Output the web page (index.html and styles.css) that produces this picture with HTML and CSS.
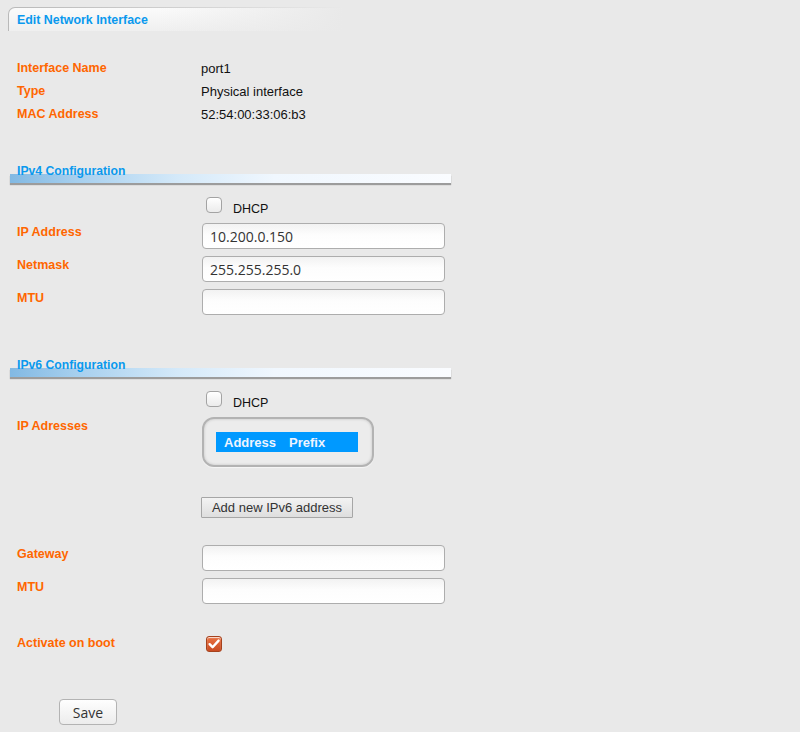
FILE: index.html
```html
<!DOCTYPE html>
<html>
<head>
<meta charset="utf-8">
<title>Edit Network Interface</title>
<link rel="stylesheet" href="styles.css">
</head>
<body>
<div class="page">
  <div class="tab-wrap"><div class="tab">Edit Network Interface</div></div>

  <div class="info">
    <div class="row info-row"><div class="label">Interface Name</div><div class="value">port1</div></div>
    <div class="row info-row"><div class="label">Type</div><div class="value">Physical interface</div></div>
    <div class="row info-row"><div class="label">MAC Address</div><div class="value">52:54:00:33:06:b3</div></div>
  </div>

  <div class="section sec-v4">
    <div class="section-title">IPv4 Configuration</div>
    <div class="section-bar"></div>
  </div>

  <div class="row dhcp-row">
    <div class="label"></div>
    <span class="check"></span><span class="check-text">DHCP</span>
  </div>
  <div class="row field"><div class="label">IP Address</div><input class="text" type="text" value="10.200.0.150"></div>
  <div class="row field"><div class="label">Netmask</div><input class="text" type="text" value="255.255.255.0"></div>
  <div class="row field"><div class="label">MTU</div><input class="text" type="text" value=""></div>

  <div class="section sec-v6">
    <div class="section-title">IPv6 Configuration</div>
    <div class="section-bar"></div>
  </div>

  <div class="row dhcp-row">
    <div class="label"></div>
    <span class="check"></span><span class="check-text">DHCP</span>
  </div>
  <div class="row field"><div class="label">IP Adresses</div>
    <div class="addr-box">
      <div class="addr-head"><span class="th-addr">Address</span><span class="th-prefix">Prefix</span></div>
    </div>
  </div>
  <div class="row btn-row"><div class="label"></div><button class="add-btn" type="button">Add new IPv6 address</button></div>

  <div class="row field gw"><div class="label">Gateway</div><input class="text" type="text" value=""></div>
  <div class="row field"><div class="label">MTU</div><input class="text" type="text" value=""></div>

  <div class="row boot-row"><div class="label">Activate on boot</div>
    <span class="check checked"><svg width="14" height="14" viewBox="0 0 14 14"><path d="M2.6 7.2 L5.6 10.2 L11.6 3.6" fill="none" stroke="#fff" stroke-width="2.4" stroke-linecap="round" stroke-linejoin="round"/></svg></span>
  </div>

  <div class="save-row"><button class="save-btn" type="button">Save</button></div>
</div>
</body>
</html>
```

FILE: styles.css
```css
html, body {
  margin: 0;
  padding: 0;
  background: #e9e9e9;
}
body {
  font-family: "Liberation Sans", Arial, sans-serif;
  font-size: 12px;
  color: #111;
}
.page {
  padding-top: 7px;
  width: 800px;
  height: 732px;
  box-sizing: border-box;
}
.tab-wrap {
  margin-left: 8px;
  width: 335px;
  height: 24px;
  box-sizing: border-box;
  padding: 1px 0 0 1px;
  border-top-left-radius: 7px;
  background: linear-gradient(to right, #b9b9b9 0%, #cbcbcb 40%, rgba(233,233,233,0) 100%);
}
.tab {
  height: 23px;
  line-height: 24px;
  padding-left: 8px;
  border-top-left-radius: 6px;
  background:
    linear-gradient(to right, rgba(233,233,233,0) 0%, rgba(233,233,233,0) 45%, #e9e9e9 100%),
    linear-gradient(to bottom, #fbfbfb 0%, #efefef 100%);
  color: #0a99ee;
  font-weight: bold;
  font-size: 12.4px;
}
.info {
  margin-top: 26px;
}
.row {
  display: flex;
  align-items: flex-start;
  padding-left: 17px;
}
.label {
  width: 185px;
  flex: none;
  color: #ff6600;
  font-weight: bold;
  font-size: 12.5px;
  line-height: 16px;
  padding-top: 1px;
}
.info-row {
  height: 23px;
}
.info-row .label,
.info-row .value {
  line-height: 23px;
  padding-top: 0;
}
.value {
  font-size: 13px;
  color: #111;
  margin-left: -1px;
}
.section {
  margin-left: 10px;
  width: 441px;
}
.sec-v4 { margin-top: 38px; }
.sec-v6 { margin-top: 43px; }
.section-title {
  position: relative;
  z-index: 1;
  padding-left: 7px;
  line-height: 14px;
  height: 14px;
  margin-bottom: -4px;
  color: #0a99ee;
  font-weight: bold;
  font-size: 12.2px;
}
.section-bar {
  height: 9px;
  background: linear-gradient(to right, #82b9e3 0%, #a6cfee 15%, #d4e9f9 38%, #f0f7fe 60%, #fafcff 100%);
  box-shadow: 0 2px 1px rgba(0,0,0,0.33);
}
.dhcp-row {
  margin-top: 11px;
  height: 22px;
}
.check {
  flex: none;
  width: 16px;
  height: 16px;
  box-sizing: border-box;
  margin-left: 4px;
  margin-top: 3px;
  border: 1px solid #a3a3a3;
  border-radius: 4px;
  background: linear-gradient(to bottom, #ffffff, #ebebeb);
  box-shadow: inset 0 1px 1px rgba(255,255,255,0.8);
}
.check-text {
  margin-left: 11px;
  margin-top: 8px;
  line-height: 14px;
  font-size: 12.5px;
  color: #111;
}
.field {
  margin-top: 7px;
}
.text {
  width: 243px;
  height: 26px;
  box-sizing: border-box;
  margin: 0;
  padding: 0 7px;
  border: 1px solid #adadad;
  border-radius: 4px;
  background: linear-gradient(to bottom, #f2f2f2 0%, #fdfdfd 45%, #ffffff 100%);
  font-family: "Open Sans", "DejaVu Sans", sans-serif;
  font-size: 14px;
  color: #333;
  outline: none;
}
.addr-box {
  width: 172px;
  height: 50px;
  box-sizing: border-box;
  padding: 13px 0 0 12px;
  border: 2px solid #b3b3b3;
  border-radius: 12px;
  background: #ececec;
  box-shadow: inset 0 0 3px rgba(0,0,0,0.18), 0 1px 1px rgba(255,255,255,0.6);
}
.addr-head {
  width: 142px;
  height: 20px;
  background: #0099ff;
  display: flex;
  color: #eef4ff;
  font-weight: bold;
  font-size: 13px;
  line-height: 22px;
}
.th-addr { padding-left: 8px; }
.th-prefix { margin-left: 13px; }
.btn-row {
  margin-top: 30px;
}
.add-btn {
  margin: 0 0 0 -1px;
  width: 152px;
  height: 21px;
  padding: 0;
  border: 1px solid #a6a6a6;
  border-radius: 1px;
  background: linear-gradient(to bottom, #f3f3f3, #dedede);
  font-family: "Liberation Sans", Arial, sans-serif;
  font-size: 13px;
  color: #333;
}
.gw {
  margin-top: 27px;
}
.boot-row {
  margin-top: 30px;
}
.check.checked {
  margin-top: 2px;
  border: 1px solid #a5421d;
  border-radius: 3px;
  background: linear-gradient(to bottom, #ea7242, #c94b22);
  display: flex;
  align-items: center;
  justify-content: center;
}
.check.checked svg { display: block; }
.save-row {
  margin-top: 47px;
  padding-left: 59px;
}
.save-btn {
  width: 58px;
  height: 26px;
  margin: 0;
  padding: 0;
  border: 1px solid #b3b3b3;
  border-radius: 4px;
  background: linear-gradient(to bottom, #fefefe, #ececec);
  font-family: "Open Sans", "DejaVu Sans", sans-serif;
  font-size: 14px;
  color: #333;
}
```
